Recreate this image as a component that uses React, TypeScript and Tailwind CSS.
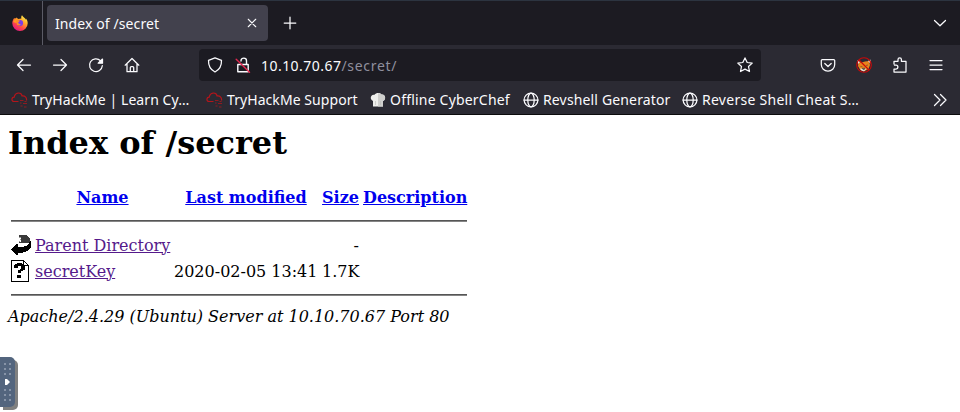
import React from "react";

type P = { children: React.ReactNode; className?: string; size?: number };

function Icon({ children, className = "", size = 16 }: P) {
  return (
    <svg
      width={size}
      height={size}
      viewBox="0 0 16 16"
      fill="none"
      stroke="#fbfbfe"
      strokeWidth="1.25"
      strokeLinecap="round"
      strokeLinejoin="round"
      className={"shrink-0 " + className}
    >
      {children}
    </svg>
  );
}

function Firefox() {
  return (
    <svg width="16" height="16" viewBox="0 0 16 16" className="shrink-0">
      <defs>
        <linearGradient id="fx" x1="13" y1="1" x2="3" y2="15" gradientUnits="userSpaceOnUse">
          <stop offset="0" stopColor="#fff44f" />
          <stop offset=".35" stopColor="#ffa52a" />
          <stop offset=".65" stopColor="#ff4a45" />
          <stop offset="1" stopColor="#e31587" />
        </linearGradient>
      </defs>
      <path d="M10 .3c-.8 1-.9 2.200-.6 3.100L6 4 4.700 2.500 3.500 3.600 2 3.200C.8 4.600.3 6.500.3 8.200a7.700 7.700 0 0 0 15.400 0c0-1.800-.7-3.600-1.800-4.700l.1 1.200C13 3 11 2.200 10 .3z" fill="url(#fx)" />
      <path d="M3.500 3.500 6.500 4 8 5.500 6 6.500 4 8 1 7z" fill="#ff9a22" />
      <circle cx="8.200" cy="8" r="2.900" fill="#7a3de8" />
      <path d="M4 5.500 7.800 5.300 7 7 5.800 7.800 7.500 9 9 9.200 7.300 10.400 5 10z" fill="#ff8a2a" />
    </svg>
  );
}

function Cloud() {
  return (
    <svg width="17" height="16" viewBox="0 0 17 16" fill="none" stroke="#b3151b" strokeWidth="1.200" className="shrink-0">
      <path d="M7.500 9.500H3C.2 9.300.2 5.500 3.200 5.200 4 .2 10 -.5 11.200 4c3-.3 4.800 2 4.300 4.500" />
      <path d="M9 8.500h3.500M13.500 9.500h2M9 11h1.500M12 11.500h4M9.500 14h2M13 15h2.500" strokeOpacity=".75" />
    </svg>
  );
}

function Chef() {
  return (
    <svg width="16" height="16" viewBox="0 0 16 16" className="shrink-0">
      <path d="M3 14.500V9C-.8 7.500.6 2 4.500 2.800 6 .6 10 .6 11.500 2.500c4-.6 5 5 1.500 6.500v5.500z" fill="#eeeeec" />
      <path d="M8 1.200c1.500 0 2.500.3 3.500 1.300 4-.6 5 5 1.500 6.500v5.500H8z" fill="#cfcfcd" />
      <path d="M5.500 9v4M10.500 9v4" stroke="#b8b8b6" strokeWidth=".6" />
    </svg>
  );
}

function Globe() {
  return (
    <Icon>
      <circle cx="8" cy="8" r="6.900" />
      <ellipse cx="8" cy="8" rx="3.200" ry="6.900" />
      <path d="M1 8h14" />
    </Icon>
  );
}

function Fox() {
  return (
    <svg width="16" height="16" viewBox="0 0 16 16" className="shrink-0">
      <path d="M2.500 5l3 .5L9 4.500l4-.5 1 4-1.500 4L8 14.500 4 12.500 2 9z" fill="#e8841c" />
      <path d="M12 4l2.500-1.500v4zM1.500 3l2.500 2-2 2zM4 11.500l3.500.5 3-.5-2.500 3-3-1.200z" fill="#e9e4df" />
      <path d="M6 11.500l3-.5L8 13zM4.500 9.500l2 .3M10 8.500l2-.5" fill="#666" stroke="#52463c" strokeWidth=".6" />
      <circle cx="8" cy="8" r="7.300" fill="none" stroke="#cc0808" strokeWidth="1.100" />
      <path d="M3 3l10 10" stroke="#cc0808" strokeWidth="1.100" />
    </svg>
  );
}

function BackIcon() {
  return (
    <svg width="20" height="22" viewBox="0 0 20 22" shapeRendering="crispEdges" className="block">
      <path d="M8 1h6l3 1 2 3v4l-4 0H8V8h2V3H8z" fill="#3a3a3a" />
      <path d="M8 3h2v1H8zM9 5h1v1H9zM8 7h1v1H8z" fill="#999" />
      <path d="M0 15l6-5h1v3h4l4-1 3-2 1-3h1v6l-2 3-4 2-4 1H7v2H5z" fill="#000" />
    </svg>
  );
}

function UnknownIcon() {
  return (
    <svg width="20" height="22" viewBox="0 0 20 22" shapeRendering="crispEdges" className="block">
      <path d="M.5.500H12.500L17.500 5.500V21.500H.500z" fill="#fff" stroke="#000" />
      <path d="M12.500.5v5h5" fill="none" stroke="#000" />
      <path d="M3 5h1V4h2V3h5v1h2v1h1v5h-2v1h-2v2H7v-3h2V9h1V6H7v2H3zM6 15h4v3H6z" fill="#000" />
    </svg>
  );
}

function Bookmark({ icon, children, className }: { icon: React.ReactNode; children: React.ReactNode; className: string }) {
  return (
    <div className={"flex shrink-0 items-center gap-1 whitespace-nowrap " + className}>
      {icon}
      <span>{children}</span>
    </div>
  );
}

const rule = <hr className="my-2 h-[2px] border-0 border-t border-t-[#555] bg-[#858585]" />;

export default function App() {
  const link = "text-[#0000ee] underline";
  const visited = "text-[#551a8b] underline";
  return (
    <div className="flex h-[412px] w-[960px] flex-col overflow-hidden bg-white">
      <header className="h-[115px] shrink-0 border-b border-[#0c0c0d] bg-[#2b2a33] font-['Noto_Sans',sans-serif] text-[14px] text-[#fbfbfe]">
        <div className="flex h-[45px] items-center border-t border-[#2c3440] bg-[#1c1b22]">
          <div className="flex h-full w-[43px] items-center border-r border-[#5b5b66] pl-3">
            <Firefox />
          </div>
          <div className="ml-1 flex h-9 w-[221px] items-center justify-between rounded bg-[#42414d] pl-2 pr-[11px]">
            <span className="tracking-[0.1px]">Index of /secret</span>
            <Icon size={10}><path d="M2 2l12 12M14 2L2 14" strokeWidth="1.700" /></Icon>
          </div>
          <Icon className="ml-[14px]"><path d="M8 2.200v11.600M2.200 8h11.600" /></Icon>
          <Icon className="ml-auto mr-3"><path d="M2.500 5.500L8 10.800l5.500-5.300" /></Icon>
        </div>

        <div className="flex h-10 items-center">
          <div className="flex w-[199px] gap-5 pl-4">
            <Icon><path d="M14.500 8h-13M7 2.500L1.500 8 7 13.500" /></Icon>
            <Icon><path d="M1.500 8h13M9 2.500L14.500 8 9 13.500" /></Icon>
            <Icon><path d="M14.300 8.700A6.400 6.400 0 1 1 12.500 3.700" /><path d="M10.200 6.200h4.300V2z" fill="#fbfbfe" /></Icon>
            <Icon><path d="M1.200 8.200L8 1.500l6.800 6.700M3 7v7.700h10V7M6.300 14.500v-4q0-1 1-1h1.400q1 0 1 1v4" /></Icon>
          </div>
          <div className="flex h-8 w-[562px] items-center rounded bg-[#1c1b22] px-2">
            <Icon><path d="M8 .8l6.500 2.500c.2 5.200-1.800 9.400-6.500 11.700C3.300 12.700 1.300 8.500 1.500 3.300z" /></Icon>
            <Icon className="ml-3"><path d="M2.800 7.500h10.400v7.200H2.800zM6 4V3.700C6 .2 11.500.2 11.500 3.700v3.800" strokeWidth="1.400" /><path d="M1.200 2.200l13.300 13" stroke="#e22850" strokeWidth="1.400" /></Icon>
            <span className="ml-[10px] tracking-[0.46px]">10.10.70.67<span className="tracking-[0.7px] text-[#8f8f9d]">/secret/</span></span>
            <Icon className="ml-auto"><path d="M8 .9l2.200 4.600 5 .6-3.700 3.400 1 5L8 12.100l-4.500 2.400 1-5L.8 6.100l5-.6z" /></Icon>
          </div>
          <div className="ml-auto flex gap-5 pr-4">
            <Icon><path d="M2.300 2.500h11.400q1 0 1 1V7.500a6.700 6.700 0 0 1-13.400 0v-4q0-1 1-1zM4.800 6.500L8 9.500l3.200-3" /></Icon>
            <Fox />
            <Icon><path d="M2 7V4.300h4V2.500a1.700 1.700 0 0 1 3.400 0v1.800H14V15H2v-3h2a1.900 1.900 0 0 0 0-3.800H2.500" /></Icon>
            <Icon><path d="M2 3.500h12M2 8h12M2 12.500h12" /></Icon>
          </div>
        </div>

        <div className="flex h-[29px] items-center pl-[11px] pr-3">
          <Bookmark className="w-[195px] tracking-[0.08px]" icon={<Cloud />}>TryHackMe | Learn Cy…</Bookmark>
          <Bookmark className="w-[164px] tracking-[0.07px]" icon={<Cloud />}>TryHackMe Support</Bookmark>
          <Bookmark className="w-[153px] tracking-[0.2px]" icon={<Chef />}>Offline CyberChef</Bookmark>
          <Bookmark className="w-[159px] tracking-[0.15px]" icon={<Globe />}>Revshell Generator</Bookmark>
          <Bookmark className="w-[190px] tracking-[0.27px]" icon={<Globe />}>Reverse Shell Cheat S…</Bookmark>
          <Icon className="ml-auto"><path d="M2.500 2.500L8 8l-5.500 5.500M8.500 2.500L14 8l-5.500 5.500" /></Icon>
        </div>
      </header>

      <main className="px-2 pt-[9px] font-['DejaVu_Serif',serif] text-[16px] leading-[19px] text-black">
        <h1 className="mb-[21px] h-[38px] text-[32px] font-bold leading-[38px]">Index of /secret</h1>
        <table className="w-[462px] table-fixed border-separate border-spacing-[2px] whitespace-nowrap [&_td]:p-px [&_th]:p-px">
          <colgroup>
            <col className="w-[22px]" />
            <col className="w-[137px]" />
            <col className="w-[146px]" />
            <col className="w-[39px]" />
            <col className="w-[106px]" />
          </colgroup>
          <tbody>
            <tr className="h-6">
              <th />
              <th><a className={link}>Name</a></th>
              <th><a className={link}>Last modified</a></th>
              <th><a className={link}>Size</a></th>
              <th><a className={link}>Description</a></th>
            </tr>
            <tr><th colSpan={5}>{rule}</th></tr>
            <tr className="h-6">
              <td><BackIcon /></td>
              <td><a className={visited}>Parent Directory</a></td>
              <td />
              <td className="text-right">-</td>
              <td />
            </tr>
            <tr className="h-6">
              <td><UnknownIcon /></td>
              <td><a className={visited}>secretKey</a></td>
              <td>2020-02-05 13:41</td>
              <td className="text-right">1.7K</td>
              <td />
            </tr>
            <tr><th colSpan={5}>{rule}</th></tr>
          </tbody>
        </table>
        <address className="italic">Apache/2.4.29 (Ubuntu) Server at 10.10.70.67 Port 80</address>
      </main>

      <aside className="mb-[5px] mt-auto flex h-[50px] w-[15px] shrink-0 flex-col items-center justify-center gap-1 rounded-r-[5px] bg-[#53657e] shadow-[3px_3px_0_#808080]">
        <Dots />
        <svg width="5" height="6" viewBox="0 0 5 6"><path d="M0 0h2l3 3-3 3H0z" fill="#fff" /></svg>
        <Dots />
      </aside>
    </div>
  );
}

function Dots() {
  return (
    <div className="grid grid-cols-2 gap-[3px]">
      {[0, 1, 2, 3, 4, 5].map((n) => (
        <i key={n} className="size-[2px] bg-[#8794a8]" />
      ))}
    </div>
  );
}
